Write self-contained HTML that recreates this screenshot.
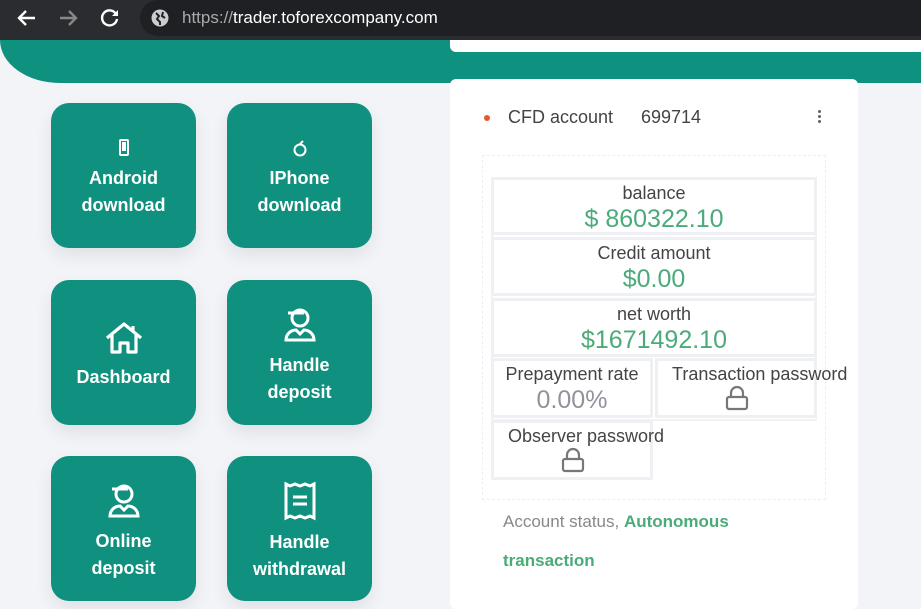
<!DOCTYPE html>
<html><head><style>
*{margin:0;padding:0;box-sizing:border-box}
body{width:921px;height:600px;overflow:hidden;background:#f3f4f7;font-family:"Liberation Sans",sans-serif;position:relative}
.bar{position:absolute;left:0;top:0;width:921px;height:40px;background:#2b2c2f}
.url{position:absolute;left:140px;top:0;width:800px;height:36px;background:#1f2023;border-radius:18px}
.teal{position:absolute;left:0;top:40px;width:921px;height:43px;background:#0e917f;border-bottom-left-radius:60px 43px}
.strip{position:absolute;left:450px;top:40px;width:471px;height:12px;background:#fff;border-radius:0 0 0 6px}
.card{position:absolute;left:450px;top:79px;width:408px;height:530px;background:#fff;border-radius:6px}
.btn{position:absolute;width:145px;height:145px;background:#10907e;border-radius:18px;color:#fff;font-weight:bold;font-size:18px;line-height:27px;text-align:center;box-shadow:0 8px 18px rgba(0,0,0,.08);display:flex;flex-direction:column;align-items:center;justify-content:center;padding-top:6px}
.btn svg{margin-bottom:8px}
.cell{position:absolute;border:3px solid #eef0f4;text-align:center;color:#444;font-size:18px;line-height:22px}
.g{color:#4bab78;font-size:25px;line-height:30px}
</style></head><body>
<div class="bar"><div class="url"></div>
<svg style="position:absolute;left:16px;top:8px" width="22" height="20" viewBox="0 0 22 20"><path d="M19 10H4M10 3L3 10l7 7" stroke="#fff" stroke-width="2.4" fill="none"/></svg>
<svg style="position:absolute;left:57px;top:8px" width="22" height="20" viewBox="0 0 22 20"><path d="M3 10h15M12 3l7 7-7 7" stroke="#888" stroke-width="2.4" fill="none"/></svg>
<svg style="position:absolute;left:99px;top:7px" width="22" height="22" viewBox="0 0 22 22"><path d="M17 7A7.5 7.5 0 1 0 18 12" stroke="#fff" stroke-width="2.4" fill="none"/><path d="M19 3v6h-6z" fill="#fff"/></svg>
<svg style="position:absolute;left:150px;top:8px" width="20" height="20" viewBox="0 0 20 20"><circle cx="10" cy="10" r="8.5" fill="#ccc"/><path d="M6 5l3 3-2 3 3 3v3M13 4l-1 4 3 2" stroke="#1f2023" stroke-width="2" fill="none"/></svg>
<div style="position:absolute;left:182px;top:8px;font-size:17px;color:#aaa">https://<span style="color:#fff">trader.toforexcompany.com</span></div>
</div>
<div class="teal"></div><div class="strip"></div>
<div class="btn" style="left:51px;top:103px"><svg width="14" height="18" viewBox="0 0 14 18"><rect x="3" y="1" width="8" height="15" rx="1" stroke="#fff" stroke-width="2" fill="none"/><rect x="5" y="3" width="4" height="9" fill="#fff"/></svg>Android<br>download</div>
<div class="btn" style="left:227px;top:103px"><svg width="18" height="18" viewBox="0 0 18 18"><circle cx="9" cy="11" r="5.5" stroke="#fff" stroke-width="2" fill="none"/><path d="M9 5l3-3" stroke="#fff" stroke-width="2"/></svg>IPhone<br>download</div>
<div class="btn" style="left:51px;top:280px"><svg width="42" height="36" viewBox="0 0 42 36"><path d="M4 18L21 4l17 14M9 15v17h8v-9h8v9h8V15M30 6v6" stroke="#fff" stroke-width="3.2" fill="none" stroke-linejoin="round"/></svg>Dashboard</div>
<div class="btn" style="left:227px;top:280px"><svg width="36" height="38" viewBox="0 0 36 38"><circle cx="18" cy="12" r="8" stroke="#fff" stroke-width="3" fill="none"/><path d="M6 7h16" stroke="#fff" stroke-width="3"/><path d="M4 34c0-6 5-10 10-10l4 4 4-4c5 0 10 4 10 10z" stroke="#fff" stroke-width="3" fill="none"/></svg>Handle<br>deposit</div>
<div class="btn" style="left:51px;top:456px"><svg width="36" height="38" viewBox="0 0 36 38"><circle cx="18" cy="12" r="8" stroke="#fff" stroke-width="3" fill="none"/><path d="M6 7h16" stroke="#fff" stroke-width="3"/><path d="M4 34c0-6 5-10 10-10l4 4 4-4c5 0 10 4 10 10z" stroke="#fff" stroke-width="3" fill="none"/></svg>Online<br>deposit</div>
<div class="btn" style="left:227px;top:456px"><svg width="34" height="40" viewBox="0 0 34 40"><path d="M3 3l4 2 5-2 5 2 5-2 5 2 4-2v34l-4-2-5 2-5-2-5 2-5-2-4 2z" stroke="#fff" stroke-width="3" fill="none"/><path d="M10 16h14M10 23h14" stroke="#fff" stroke-width="3"/></svg>Handle<br>withdrawal</div>
<div class="card">
<div style="position:absolute;left:34px;top:36px;width:6px;height:6px;border-radius:50%;background:#e8582f"></div>
<div style="position:absolute;left:58px;top:28px;font-size:18px;color:#444">CFD account</div>
<div style="position:absolute;left:191px;top:28px;font-size:18px;color:#444">699714</div>
<div style="position:absolute;left:368px;top:30px;width:3px;height:14px;background:radial-gradient(circle,#666 1.4px,transparent 1.6px) 0 0/3px 5px"></div>
<div style="position:absolute;left:32px;top:76px;width:344px;height:345px;border:1px dashed #eceef2"></div>
<div style="position:absolute;left:41px;top:98px;width:326px;height:244px;border:2px solid #f0f2f5"></div>
<div class="cell" style="left:41px;top:98px;width:326px;height:58px;padding-top:2px">balance<div class="g">$ 860322.10</div></div>
<div class="cell" style="left:41px;top:158px;width:326px;height:59px;padding-top:2px">Credit amount<div class="g">$0.00</div></div>
<div class="cell" style="left:41px;top:219px;width:326px;height:59px;padding-top:2px">net worth<div class="g">$1671492.10</div></div>
<div class="cell" style="left:41px;top:279px;width:162px;height:60px;padding-top:2px">Prepayment rate<div class="g" style="color:#909399">0.00%</div></div>
<div class="cell" style="left:205px;top:279px;width:162px;height:60px;white-space:nowrap;overflow:visible;text-align:left;padding:2px 0 0 14px">Transaction password<br><svg style="margin-left:53px" width="24" height="26" viewBox="0 0 24 26"><path d="M6 12V8a6 6 0 0 1 12 0v4" stroke="#777" stroke-width="2.2" fill="none"/><rect x="2" y="12" width="20" height="12" rx="2" stroke="#777" stroke-width="2.2" fill="none"/></svg></div>
<div class="cell" style="left:41px;top:341px;width:162px;height:60px;white-space:nowrap;text-align:left;padding:2px 0 0 14px">Observer password<br><svg style="margin-left:53px" width="24" height="26" viewBox="0 0 24 26"><path d="M6 12V8a6 6 0 0 1 12 0v4" stroke="#777" stroke-width="2.2" fill="none"/><rect x="2" y="12" width="20" height="12" rx="2" stroke="#777" stroke-width="2.2" fill="none"/></svg></div>
<div style="position:absolute;left:53px;top:423px;font-size:17px;color:#888;line-height:39px">Account status, <b style="color:#4bab78">Autonomous</b><br><b style="color:#4bab78">transaction</b></div>
</div>
</body></html>
